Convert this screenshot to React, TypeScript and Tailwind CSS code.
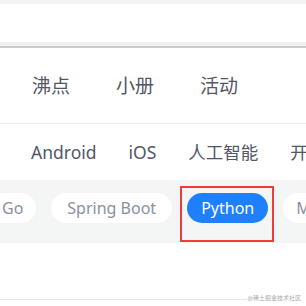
export default function App() {
  const font = { fontFamily: '"Noto Sans", "Noto Sans CJK SC", sans-serif' };
  return (
    <div className="w-[306px] h-[306px] overflow-hidden bg-white flex flex-col" style={font}>
      <div className="h-[4px] bg-[#f2f2f2]" />
      <div className="h-[38px] bg-white" />
      <div className="h-[4px] bg-[#f1f1f1]" />
      <div className="h-[2px] bg-[#cccccc]" />
      <div className="h-[75px] flex items-center pl-[32px] gap-[46px] text-[19px] text-[#515767] pt-[2px]">
        <span>沸点</span>
        <span>小册</span>
        <span>活动</span>
      </div>
      <div className="h-px bg-[#efefef]" />
      <div className="h-[56px] flex items-center whitespace-nowrap text-[17.5px] text-[#515767] -ml-[29px] gap-[32px]">
        <span className="shrink-0 w-[28px] overflow-hidden flex justify-end">前端</span>
        <span className="shrink-0">Android</span>
        <span className="shrink-0">iOS</span>
        <span className="shrink-0">人工智能</span>
        <span className="shrink-0">开发工具</span>
      </div>
      <div className="h-[63px] bg-[#f4f5f5] flex items-center whitespace-nowrap gap-[15px] -ml-[11px] pb-[8px] text-[16px]">
        <span className="shrink-0 h-[30px] rounded-full bg-white text-[#8a919f] px-[13px] flex items-center">Go</span>
        <span className="shrink-0 h-[30px] rounded-full bg-white text-[#8a919f] px-[16px] flex items-center">Spring Boot</span>
        <span className="shrink-0 relative h-[30px] rounded-full bg-[#1e80ff] text-white px-[14px] flex items-center">
          Python
          <span className="absolute -left-[7px] -right-[6px] -top-[7px] -bottom-[19px] border-2 border-[#f23b3b]" />
        </span>
        <span className="shrink-0 h-[30px] rounded-full bg-white text-[#8a919f] px-[13px] flex items-center">MySQL</span>
      </div>
      <div className="flex-1 relative">
        <div className="absolute left-0 w-[246px] top-[56px] h-px bg-[#e6e6e6]" />
        <div className="absolute right-[5px] top-[52px] text-[6px] leading-none text-[#aaaaaa]">@稀土掘金技术社区</div>
      </div>
    </div>
  );
}
